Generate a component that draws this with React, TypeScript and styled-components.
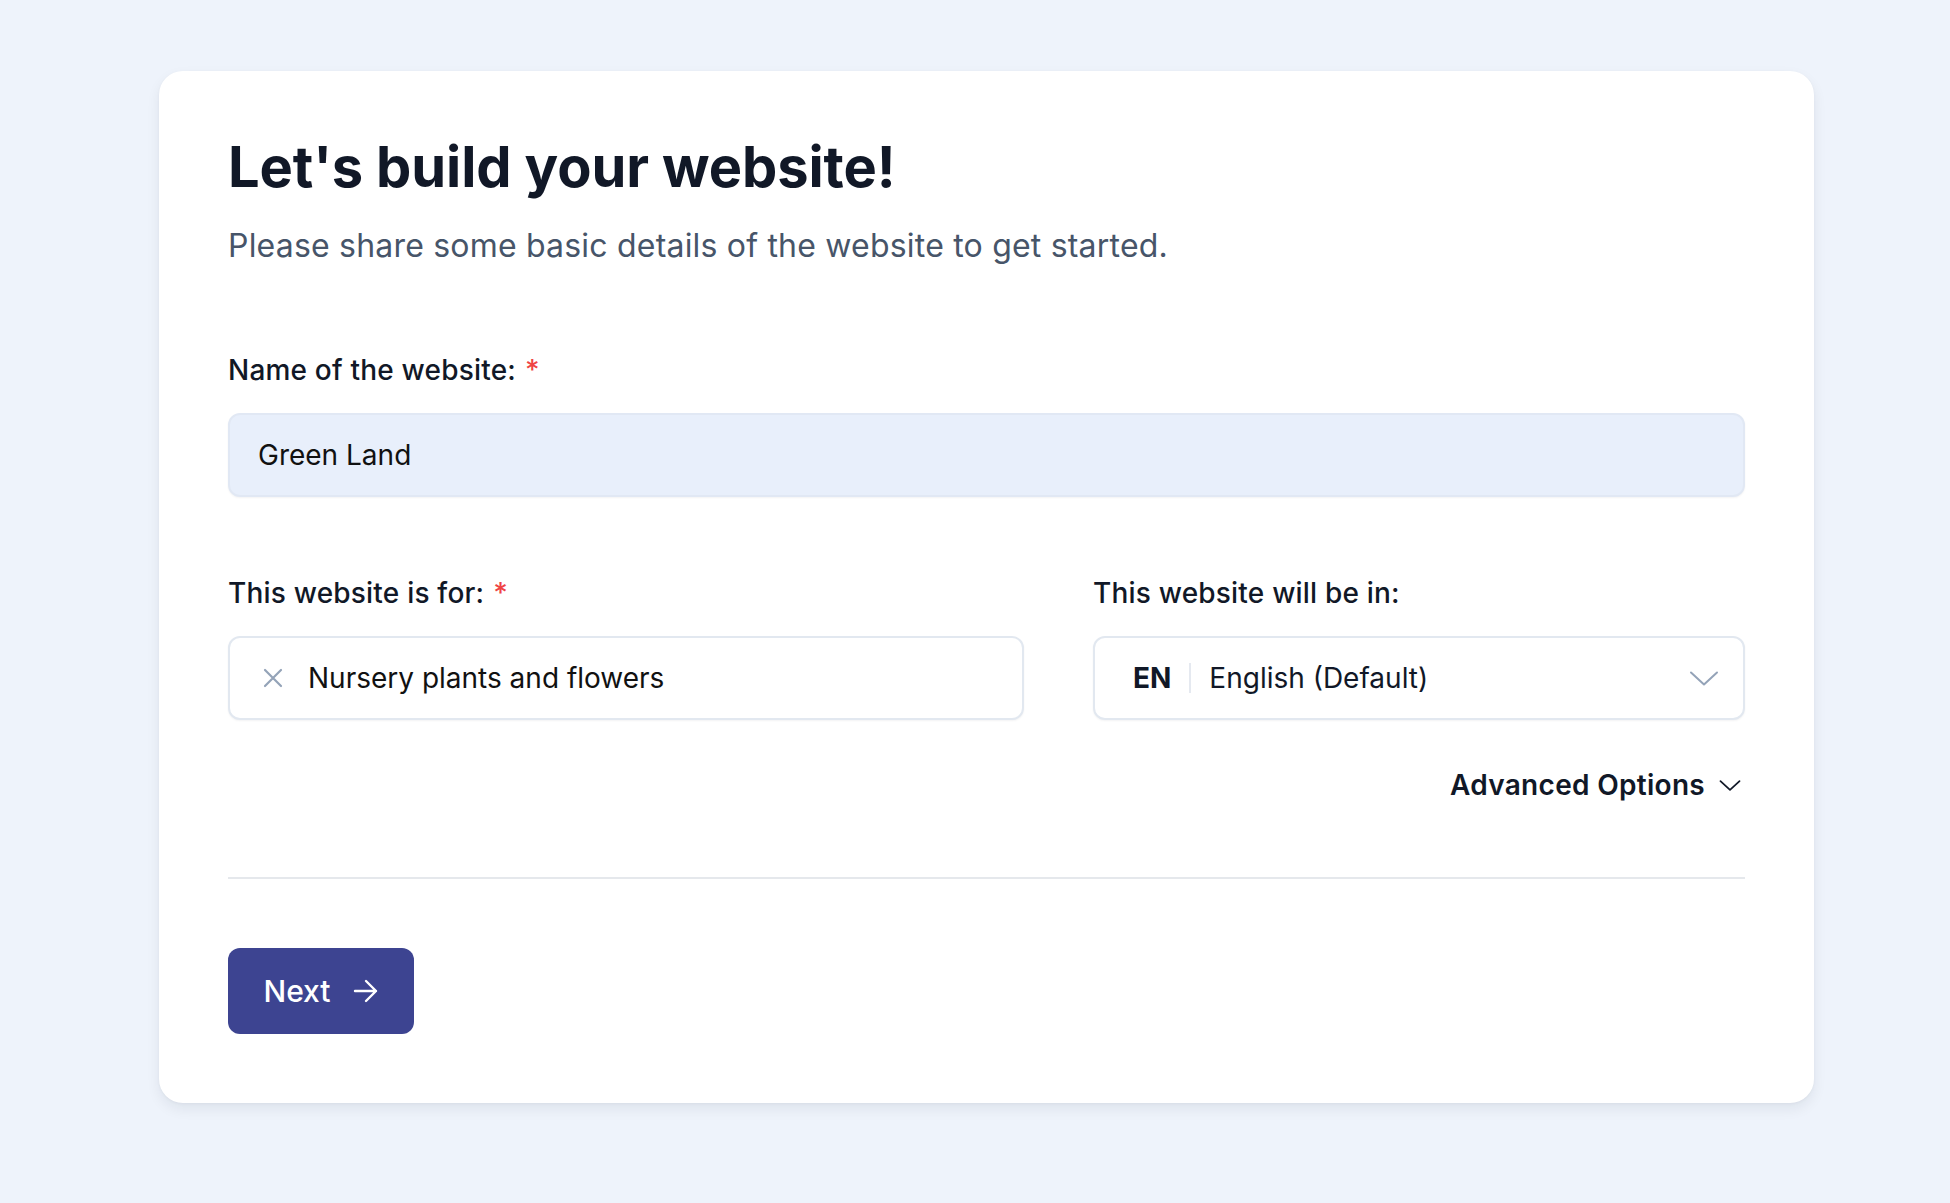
import React, { useState } from 'react'
import styled, { createGlobalStyle } from 'styled-components'

const GlobalStyle = createGlobalStyle`
  html, body {
    margin: 0;
    padding: 0;
    background: #eef3fb;
    font-family: 'Inter', 'Lato', sans-serif;
    color: #0f172a;
  }
`

const Page = styled.div`
  min-height: 1203px;
  box-sizing: border-box;
  padding: 71px 0 0 159px;
`

const Card = styled.div`
  width: 1655px;
  box-sizing: border-box;
  background: #ffffff;
  border-radius: 24px;
  box-shadow: 0 6px 14px rgba(15, 23, 42, 0.07), 0 1px 3px rgba(15, 23, 42, 0.04);
  padding: 61px 69px 69px;
  display: flex;
  flex-direction: column;
`

const Title = styled.h1`
  margin: 0;
  font-size: 56px;
  line-height: 70px;
  font-weight: 700;
  color: #111827;
  letter-spacing: -0.1px;
`

const Subtitle = styled.p`
  margin: 24px 0 0;
  font-size: 32px;
  line-height: 40px;
  font-weight: 400;
  color: #475569;
  letter-spacing: 0.2px;
`

const FieldRow = styled.div`
  display: grid;
  grid-template-columns: 796px 652px;
  column-gap: 69px;
  margin-top: 78px;
`

const Field = styled.div<{ $top?: number }>`
  display: flex;
  flex-direction: column;
  margin-top: ${(p) => p.$top ?? 0}px;
`

const Label = styled.label`
  font-size: 28px;
  line-height: 36px;
  font-weight: 500;
  color: #111827;
  letter-spacing: 0.2px;
  margin-bottom: 25px;
`

const Required = styled.span`
  color: #ef4444;
  margin-left: 9px;
`

const Box = styled.div<{ $filled?: boolean }>`
  height: 84px;
  box-sizing: border-box;
  display: flex;
  align-items: center;
  padding: 0 24px 0 28px;
  border-radius: 12px;
  border: 2px solid ${(p) => (p.$filled ? '#e1e8f4' : '#e2e8f0')};
  background: ${(p) => (p.$filled ? '#e8effb' : '#ffffff')};
  box-shadow: 0 1px 2px rgba(15, 23, 42, 0.05);
  font-size: 28px;
  color: #111111;
`

const TextInput = styled.input`
  border: none;
  outline: none;
  background: transparent;
  font: inherit;
  color: inherit;
  flex: 1;
  padding: 0;
`

const ClearButton = styled.button`
  border: none;
  background: none;
  padding: 0;
  margin: 0 24px 0 4px;
  display: flex;
  align-items: center;
  color: #94a3b8;
  cursor: pointer;
`

const Code = styled.span`
  font-weight: 700;
  color: #111827;
  padding-right: 18px;
  margin-left: 10px;
  border-right: 2px solid #e5e9f0;
  line-height: 30px;
`

const SelectValue = styled.span`
  flex: 1;
  padding-left: 18px;
  color: #111827;
`

const AdvancedRow = styled.div`
  display: flex;
  justify-content: flex-end;
  margin-top: 48px;
`

const AdvancedButton = styled.button`
  border: none;
  background: none;
  padding: 0 4px 0 0;
  display: flex;
  align-items: center;
  gap: 14px;
  font-family: inherit;
  font-size: 28px;
  font-weight: 600;
  letter-spacing: 0.3px;
  color: #111827;
  cursor: pointer;
`

const Divider = styled.hr`
  border: none;
  height: 2px;
  background: #e5e8ec;
  margin: 75px 0 0;
`

const Actions = styled.div`
  display: flex;
  margin-top: 69px;
`

const PrimaryButton = styled.button`
  height: 86px;
  width: 186px;
  border: none;
  border-radius: 12px;
  background: #3d4491;
  color: #ffffff;
  font-family: inherit;
  font-size: 30px;
  font-weight: 500;
  display: flex;
  align-items: center;
  justify-content: center;
  gap: 22px;
  cursor: pointer;
`

const Chevron = ({ size, color, stroke }: { size: number; color: string; stroke: number }) => (
  <svg width={size} height={size / 2 + 2} viewBox="0 0 30 16" fill="none">
    <path d="M2 2 L15 14 L28 2" stroke={color} strokeWidth={stroke} strokeLinecap="round" strokeLinejoin="round" />
  </svg>
)

export default function App() {
  const [name, setName] = useState('Green Land')

  return (
    <>
      <GlobalStyle />
      <Page>
        <Card>
          <Title>Let's build your website!</Title>
          <Subtitle>Please share some basic details of the website to get started.</Subtitle>

          <Field $top={86}>
            <Label>
              Name of the website:<Required>*</Required>
            </Label>
            <Box $filled>
              <TextInput value={name} onChange={(e) => setName(e.target.value)} />
            </Box>
          </Field>

          <FieldRow>
            <Field>
              <Label>
                This website is for:<Required>*</Required>
              </Label>
              <Box>
                <ClearButton aria-label="Clear">
                  <svg width="22" height="22" viewBox="0 0 22 22" fill="none">
                    <path d="M3 3 L19 19 M19 3 L3 19" stroke="currentColor" strokeWidth="2.2" strokeLinecap="round" />
                  </svg>
                </ClearButton>
                <span>Nursery plants and flowers</span>
              </Box>
            </Field>
            <Field>
              <Label>This website will be in:</Label>
              <Box>
                <Code>EN</Code>
                <SelectValue>English (Default)</SelectValue>
                <Chevron size={30} color="#94a3b8" stroke={2} />
              </Box>
            </Field>
          </FieldRow>

          <AdvancedRow>
            <AdvancedButton>
              Advanced Options
              <Chevron size={22} color="#111827" stroke={2.4} />
            </AdvancedButton>
          </AdvancedRow>

          <Divider />

          <Actions>
            <PrimaryButton>
              Next
              <svg width="26" height="24" viewBox="0 0 26 24" fill="none">
                <path d="M2 12 H23 M13 2 L23 12 L13 22" stroke="#ffffff" strokeWidth="2.4" strokeLinecap="round" strokeLinejoin="round" />
              </svg>
            </PrimaryButton>
          </Actions>
        </Card>
      </Page>
    </>
  )
}
